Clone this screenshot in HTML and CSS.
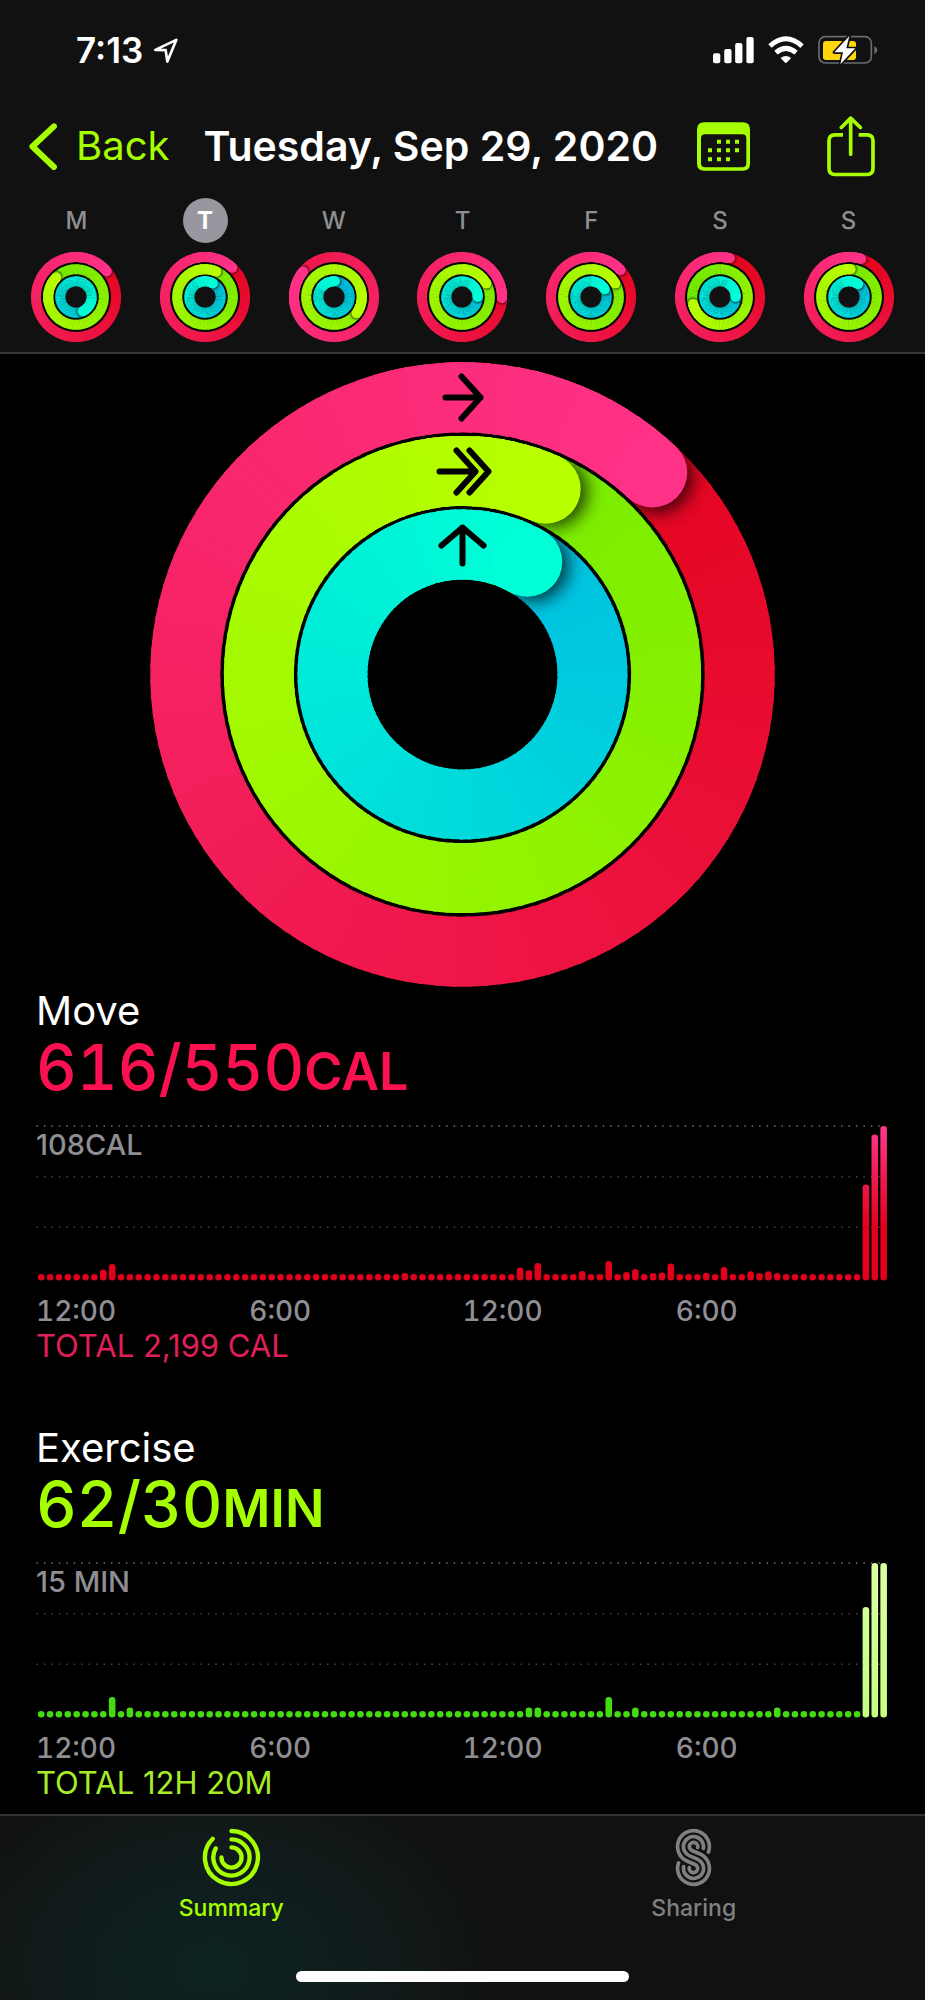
FILE: index.html
```html
<!DOCTYPE html>
<html lang="en">
<head>
<meta charset="utf-8">
<meta name="viewport" content="width=device-width, initial-scale=1">
<title>Activity – Tuesday, Sep 29, 2020</title>
<link rel="stylesheet" href="styles.css">
</head>
<body>
<header class="top">
  <div class="status">
    <div class="status-left">
      <span class="clock">7:13</span>
      <svg class="locate" viewBox="466 112 72 74" aria-hidden="true"><path d="M533 117L506 182L501 148L470 147Z"/></svg>
    </div>
    <div class="status-right">
      <svg class="signal" viewBox="752 108 124 84" aria-hidden="true"><rect x="752" y="160" width="22" height="30" rx="6"/><rect x="786" y="147" width="22" height="43" rx="6"/><rect x="819" y="129" width="22" height="61" rx="6"/><rect x="853" y="111" width="22" height="79" rx="6"/></svg>
      <svg class="wifi" viewBox="918 108 109 84" aria-hidden="true"><path class="wave" d="M924 138Q972 94 1021 138M942 158Q972 132 1003 158"/><path class="dot" d="M956 174Q972 162 988 174L975 188Q972 191 969 188Z"/></svg>
      <svg class="battery" viewBox="1068 105 180 90" aria-hidden="true"><rect class="shell" x="1071" y="110" width="157" height="79" rx="19"/><rect class="charge" x="1083" y="123" width="99" height="57" rx="9"/><path class="nub" d="M1237 138Q1246 143 1246 150Q1246 158 1237 163Z"/><path class="bolt" d="M1162 108L1117 157H1143L1135 193L1180 145H1153Z"/></svg>
    </div>
  </div>
  <nav class="bar" aria-label="Day">
    <button class="back" type="button"><svg class="chevron" viewBox="88 367 84 142" aria-hidden="true"><path d="M163 377L98 438L163 500"/></svg>Back</button>
    <h1 class="title">Tuesday, Sep 29, 2020</h1>
    <div class="actions">
      <button class="icon-button" type="button" aria-label="Calendar"><svg class="calendar" viewBox="705 366 159 146" aria-hidden="true"><path fill-rule="evenodd" d="M727 366H842Q864 366 864 388V490Q864 512 842 512H727Q705 512 705 490V388Q705 366 727 366ZM729 402Q717 402 717 414V489Q717 501 729 501H841Q853 501 853 489V414Q853 402 841 402Z"/><path class="dates" d="M771 419v12M798 419v12M825 419v12M744 444v12M771 444v12M798 444v12M825 444v12M744 471v12M771 471v12M798 471v12"/></svg></button>
      <button class="icon-button" type="button" aria-label="Share"><svg class="share" viewBox="1097 342 144 182" aria-hidden="true"><path d="M1145 398H1121Q1103 398 1103 416V499Q1103 517 1121 517H1217Q1235 517 1235 499V416Q1235 398 1217 398H1192"/><path class="round" d="M1168 349V456M1140 376L1168 348L1197 376"/></svg></button>
    </div>
  </nav>
  <div class="week" id="week"></div>
</header>

<main class="content">
  <svg class="rings" id="rings" viewBox="-312.5 -312.5 625 625" role="img" aria-label="Activity rings"></svg>

  <section class="metric move">
    <h2 class="name">Move</h2>
    <p class="value">616/550<span class="unit">CAL</span></p>
    <div class="chart"><span class="peak">108CAL</span><svg class="plot" id="move-plot" viewBox="0 0 853 156" role="img" aria-label="Move by quarter hour"></svg></div>
    <div class="axis"><span>12:00</span><span>6:00</span><span>12:00</span><span>6:00</span></div>
    <p class="total">TOTAL 2,199 CAL</p>
  </section>

  <section class="metric exercise">
    <h2 class="name">Exercise</h2>
    <p class="value">62/30<span class="unit">MIN</span></p>
    <div class="chart"><span class="peak">15 MIN</span><svg class="plot" id="exercise-plot" viewBox="0 0 853 156" role="img" aria-label="Exercise by quarter hour"></svg></div>
    <div class="axis"><span>12:00</span><span>6:00</span><span>12:00</span><span>6:00</span></div>
    <p class="total">TOTAL 12H 20M</p>
  </section>
</main>

<footer class="dock">
  <nav class="tabs" aria-label="Sections">
    <a class="tab current" href="#summary" aria-current="page">
      <svg class="tab-icon" viewBox="-88 -88 176 176" aria-hidden="true"><path d="M0-79A79 79 0 1 1-56-56M0-54A54 54 0 1 1-47-27M0-30A30 30 0 1 1-30 0"/></svg>
      Summary
    </a>
    <a class="tab" href="#sharing">
      <svg class="tab-icon sharing-icon" viewBox="-88 -88 176 176" aria-hidden="true"><path d="M44.6-16.3A47.5 47.5 0 1 0-18.2 11.3L4.8 21A12.5 12.5 0 1 1-12.5 30M29.5-27.3A30 30 0 1 0-11.5-4.8L11.5 4.8A30 30 0 1 1-29.5 27.3M12.5-30A12.5 12.5 0 1 0-4.8-21L18.2-11.3A47.5 47.5 0 1 1-44.6 16.3"/></svg>
      Sharing
    </a>
  </nav>
  <div class="home"></div>
</footer>
<script src="app.js"></script>
</body>
</html>
```
FILE: styles.css
```css
* { box-sizing: border-box; }

body {
  margin: 0;
  min-height: 100vh;
  display: flex;
  flex-direction: column;
  background: #000;
  color: #fff;
  font-family: Inter, "Liberation Sans", sans-serif;
}

h1, h2, p { margin: 0; }

svg { display: block; flex: none; }

button {
  padding: 0;
  border: 0;
  background: none;
  color: inherit;
  font: inherit;
  cursor: pointer;
}

/* Header */
.top {
  background: #111;
  border-bottom: 2px solid #363636;
}

.status {
  height: 100px;
  padding: 0 47px 0 76px;
  display: flex;
  align-items: center;
  justify-content: space-between;
}

.status-left { display: flex; align-items: center; gap: 11px; }
.status-right { display: flex; align-items: center; gap: 14px; }
.clock { font-size: 35px; line-height: 40px; font-weight: 600; }
.locate { width: 24px; height: 25px; fill: none; stroke: #fff; stroke-width: 8; stroke-linejoin: round; }
.signal { width: 41px; height: 28px; fill: #fff; }
.wifi { width: 36px; height: 28px; }
.wave { fill: none; stroke: #fff; stroke-width: 15; }
.dot { fill: #fff; }
.battery { width: 60px; height: 30px; }
.shell { fill: none; stroke: #6c6c70; stroke-width: 5; }
.charge { fill: #ffd60a; }
.nub { fill: #6c6c70; }
.bolt { fill: #fff; stroke: #111; stroke-width: 10; stroke-linejoin: round; paint-order: stroke; }

.bar {
  height: 92px;
  padding: 0 50px 0 29px;
  display: flex;
  align-items: center;
  color: #a6ff00;
}

.back {
  display: flex;
  align-items: center;
  gap: 19px;
  font-size: 40px;
  line-height: 48px;
}

.chevron { width: 28px; height: 47px; fill: none; stroke: currentColor; stroke-width: 18; stroke-linecap: round; stroke-linejoin: round; }
.title { margin-left: 34px; color: #fff; font-size: 41px; line-height: 48px; font-weight: 600; white-space: nowrap; }
.actions { margin-left: auto; display: flex; align-items: center; gap: 77px; }
.calendar { width: 53px; height: 49px; fill: currentColor; }
.dates { stroke: currentColor; stroke-width: 12; }
.share { width: 48px; height: 61px; fill: none; stroke: currentColor; stroke-width: 11; }
.round { stroke-linecap: round; stroke-linejoin: round; }

.week {
  padding: 6px 12px 10px;
  display: grid;
  grid-template-columns: repeat(7, 1fr);
}

.day { display: flex; flex-direction: column; align-items: center; gap: 9px; }

.letter {
  width: 45px;
  height: 45px;
  border-radius: 50%;
  color: #8e8e93;
  font-size: 24px;
  line-height: 46px;
  font-weight: 500;
  text-align: center;
}

.selected .letter { background: #98979f; color: #fff; font-weight: 700; }
.day-rings { width: 90px; height: 90px; }

/* Rings and charts */
.content { padding: 8px 36px 0; }
.rings { width: 100%; max-width: 625px; margin: 0 auto; }
.arrows { fill: none; stroke: #000; stroke-width: 6; stroke-linecap: round; stroke-linejoin: round; }

.metric { margin-bottom: 60px; }
.metric:last-child { margin-bottom: 8px; }
.name { font-size: 40px; line-height: 48px; font-weight: 400; }
.value { font-size: 63px; line-height: 64px; font-weight: 500; font-variant-numeric: tabular-nums; }
.unit { font-size: 52px; line-height: 40px; font-weight: 600; }
.move .value { color: #fa114f; }
.exercise .value { color: #a6ff00; }
.chart { position: relative; margin-top: 26px; }
.plot { width: 100%; }
.peak { position: absolute; top: 4px; left: 0; color: #8e8e93; font-size: 29px; line-height: 32px; font-weight: 500; }
.axis { margin-top: 14px; display: grid; grid-template-columns: repeat(4, 1fr); color: #8e8e93; font-size: 28px; line-height: 32px; font-weight: 500; font-variant-numeric: tabular-nums; }
.total { margin-top: 1px; font-size: 31px; line-height: 36px; font-weight: 400; }
.move .total { color: #e01f58; }
.exercise .total { color: #a8ec28; }

/* Bottom bar */
.dock {
  margin-top: auto;
  padding-bottom: 18px;
  border-top: 2px solid #333;
  background: radial-gradient(ellipse 290px 210px at 23% 82%, #0c2322, #111b1b 55%, #111 100%);
}

.tabs { display: grid; grid-template-columns: 1fr 1fr; height: 155px; }
.tab { padding-top: 12px; display: flex; flex-direction: column; align-items: center; gap: 7px; color: #808080; font-size: 23px; line-height: 28px; font-weight: 500; text-decoration: none; }
.current { color: #a6ff00; }
.tab-icon { width: 59px; height: 59px; fill: none; stroke: currentColor; stroke-width: 13; stroke-linecap: round; }
.sharing-icon { stroke-width: 11; }
.home { width: 36%; height: 11px; margin: 0 auto; border-radius: 6px; background: #fff; }
```
FILE: app.js
```js
const NS = 'http://www.w3.org/2000/svg';
const COLORS = [
  [[225, 0, 20], [255, 50, 136]],
  [[56, 217, 0], [184, 255, 0]],
  [[0, 186, 225], [0, 255, 214]]
];

function add(parent, tag, attrs) {
  const el = document.createElementNS(NS, tag);
  for (const key in attrs) el.setAttribute(key, attrs[key]);
  parent.appendChild(el);
  return el;
}

function mix(pair, t) {
  return 'rgb(' + pair[0].map((c, i) => Math.round(c + (pair[1][i] - c) * t)).join(',') + ')';
}

function point(r, degrees) {
  const a = degrees * Math.PI / 180;
  return (r * Math.sin(a)).toFixed(2) + ' ' + (-r * Math.cos(a)).toFixed(2);
}

// Draws one ring whose colour runs along its whole length, laps included.
function drawRing(svg, id, r, width, laps, colors) {
  const end = laps * 360;
  const start = end - 360;
  const outer = r + width / 2;
  const inner = r - width / 2;
  const circle = q => `M0 ${-q}A${q} ${q} 0 1 1 0 ${q}A${q} ${q} 0 1 1 0 ${-q}Z`;
  const clip = add(svg, 'clipPath', { id: id });
  add(clip, 'path', { d: circle(outer) + circle(inner), 'clip-rule': 'evenodd' });
  const blur = add(svg, 'filter', { id: id + 'b', x: '-50%', y: '-50%', width: '200%', height: '200%' });
  add(blur, 'feGaussianBlur', { stdDeviation: width / 8 });

  const arc = (from, to) => add(svg, 'path', {
    d: `M${point(r, from)}A${r} ${r} 0 0 1 ${point(r, to)}`,
    fill: 'none', 'stroke-width': width, stroke: mix(colors, Math.min(1, (from + to) / 2 / end))
  });
  for (let a = start; a < end; a += 3) arc(a, Math.min(a + 4, end));

  const group = add(svg, 'g', { 'clip-path': `url(#${id})` });
  const [sx, sy] = point(r, end + width * 6 / r).split(' ');
  add(group, 'circle', { cx: sx, cy: sy, r: width / 2, fill: '#000', opacity: .75, filter: `url(#${id}b)` });
  for (let a = end - 60; a < end; a += 3) arc(a, Math.min(a + 4, end));
  const [cx, cy] = point(r, end).split(' ');
  add(svg, 'circle', { cx: cx, cy: cy, r: width / 2, fill: mix(colors, 1) });
}

const week = [
  ['M', 1.14, 1.875, 1.43], ['T', 1.12, 2.067, 1.083], ['W', 1.86, 3.35, 1.01],
  ['T', 1.255, 2.17, 1.25], ['F', 1.133, 2.17, 1.17], ['S', 1.04, 1.71, 1.25], ['S', 1.05, 2.01, 1.1]
];
week.forEach((day, i) => {
  const button = document.createElement('button');
  button.type = 'button';
  button.className = i === 1 ? 'day selected' : 'day';
  const letter = document.createElement('span');
  letter.className = 'letter';
  letter.textContent = day[0];
  button.appendChild(letter);
  const svg = add(button, 'svg', { class: 'day-rings', viewBox: '-45 -45 90 90', 'aria-hidden': 'true' });
  add(svg, 'circle', { r: 27.5, fill: 'none', stroke: '#050805', 'stroke-width': 33 });
  [40, 27.8, 15.7].forEach((r, k) => drawRing(svg, `d${i}${k}`, r, 10, day[k + 1], COLORS[k]));
  document.getElementById('week').appendChild(button);
});

const rings = document.getElementById('rings');
[277.2, 203.6, 130].forEach((r, k) => drawRing(rings, 'ring' + k, r, 70, week[1][k + 1], COLORS[k]));
add(rings, 'path', {
  class: 'arrows',
  d: 'M-17-277H18M-1-298L18-277L-1-256M-23-203H13M-6-224L13-203L-6-182M7-224L26-203L7-182M0-147V-111M-21-129L0-147L21-129'
});

// Quarter-hour bars; every bar not listed keeps the minimum height.
function drawPlot(id, heights, stops, tall) {
  const svg = document.getElementById(id);
  const gradient = add(svg, 'linearGradient', { id: id + '-fill', gradientUnits: 'userSpaceOnUse', x1: 0, y1: 156, x2: 0, y2: 0 });
  stops.forEach((c, i) => add(gradient, 'stop', { offset: i / (stops.length - 1), 'stop-color': c }));
  [[1, '#777'], [51.7, '#484848'], [102.3, '#484848']].forEach(([y, color]) => {
    add(svg, 'line', { x1: .5, x2: 849, y1: y, y2: y, stroke: color, 'stroke-width': 1.4, 'stroke-dasharray': '1.4 6.05' });
  });
  for (let i = 0; i < 96; i++) {
    const h = heights[i] || 6.6;
    add(svg, 'rect', {
      x: (5.2 + i * 8.868 - 3.3).toFixed(2), y: 155.6 - h, width: 6.6, height: h, rx: 3.3,
      fill: h > 60 || !tall ? `url(#${id}-fill)` : tall
    });
  }
}

drawPlot('move-plot', {
  7: 11, 8: 16.5, 41: 7.5, 54: 13, 55: 10.5, 56: 17.5, 61: 9.5, 64: 19.5, 66: 8.5, 67: 11.5,
  69: 7.5, 70: 8, 71: 17, 75: 7.8, 77: 13.5, 80: 9.3, 81: 7.5, 82: 9.3, 83: 7.5, 93: 96, 94: 146, 95: 154.5
}, ['#e2001a', '#e2001a', '#ee1a50', '#ff3a90'], null);

drawPlot('exercise-plot', {
  8: 20.5, 10: 10, 55: 10, 56: 10, 64: 20.5, 67: 10, 83: 10, 93: 110.5, 94: 154.5, 95: 154.5
}, ['#c6ff80', '#daffa4'], '#42dc10');
```
